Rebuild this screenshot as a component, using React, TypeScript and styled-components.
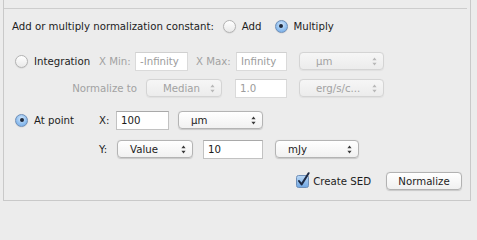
import React from 'react';
import styled, { createGlobalStyle } from 'styled-components';

const GlobalStyle = createGlobalStyle`
  html, body {
    margin: 0;
    padding: 0;
    background: #ececec;
  }
  body {
    font-family: "DejaVu Sans", "Lucida Grande", sans-serif;
    font-size: 10.2px;
    color: #1c1c1c;
  }
`;

const Panel = styled.div`
  box-sizing: border-box;
  margin-left: 3px;
  width: 468px;
  height: 201px;
  border: 1px solid #c9c9c9;
  border-top: none;
  display: flex;
  flex-direction: column;
`;

const Divider = styled.div`
  height: 8px;
  margin-right: 3px;
  border-bottom: 1px solid #cdcdcd;
`;

const Row = styled.div<{ $top: number; $h?: number; $left?: number }>`
  display: flex;
  align-items: center;
  margin-top: ${(p) => p.$top}px;
  height: ${(p) => p.$h ?? 20}px;
  padding-left: ${(p) => p.$left ?? 11}px;
`;

const FooterRow = styled(Row)`
  justify-content: flex-end;
  padding-right: 8px;
`;

const Label = styled.span<{ $w?: number; $dim?: boolean; $right?: boolean; $ml?: number }>`
  display: inline-block;
  white-space: nowrap;
  ${(p) => (p.$w ? `width: ${p.$w}px;` : '')}
  margin-left: ${(p) => p.$ml ?? 0}px;
  text-align: ${(p) => (p.$right ? 'right' : 'left')};
  color: ${(p) => (p.$dim ? '#a2a2a2' : '#1c1c1c')};
`;

const OptionCell = styled.label`
  display: flex;
  align-items: center;
  width: 84px;
  gap: 6px;
`;

const RadioDot = styled.span<{ $on?: boolean }>`
  box-sizing: border-box;
  width: 13px;
  height: 13px;
  border-radius: 50%;
  display: inline-flex;
  align-items: center;
  justify-content: center;
  flex: none;
  border: 1px solid ${(p) => (p.$on ? '#6f8fb8' : '#b3b3b3')};
  background: ${(p) =>
    p.$on
      ? 'radial-gradient(circle at 50% 35%, #d6e8fb 0%, #92c0ef 55%, #6ea6e4 100%)'
      : 'linear-gradient(#ffffff, #e9e9e9)'};
  box-shadow: 0 0.5px 1px rgba(0, 0, 0, 0.12);

  &::after {
    content: '';
    display: ${(p) => (p.$on ? 'block' : 'none')};
    width: 4px;
    height: 4px;
    border-radius: 50%;
    background: #1f2a3c;
  }
`;

const Field = styled.div<{ $w: number; $ml?: number; $dim?: boolean }>`
  box-sizing: border-box;
  width: ${(p) => p.$w}px;
  height: 19px;
  margin-left: ${(p) => p.$ml ?? 0}px;
  padding: 0 4px;
  display: flex;
  align-items: center;
  background: #ffffff;
  border: 1px solid ${(p) => (p.$dim ? '#dadada' : '#c2c2c2')};
  border-top-color: ${(p) => (p.$dim ? '#d0d0d0' : '#a9a9a9')};
  color: ${(p) => (p.$dim ? '#9c9c9c' : '#1c1c1c')};
  white-space: nowrap;
  overflow: hidden;
`;

const PopUp = styled.div<{ $w: number; $ml?: number; $dim?: boolean }>`
  box-sizing: border-box;
  width: ${(p) => p.$w}px;
  height: 18px;
  margin-left: ${(p) => p.$ml ?? 0}px;
  padding: 0 6px 0 ${(p) => (p.$dim ? 16 : 12)}px;
  display: flex;
  align-items: center;
  justify-content: space-between;
  border-radius: 4px;
  border: 1px solid ${(p) => (p.$dim ? '#d4d4d4' : '#b4b4b4')};
  background: ${(p) =>
    p.$dim ? 'linear-gradient(#f6f6f6, #ececec)' : 'linear-gradient(#ffffff, #f1f1f1)'};
  box-shadow: 0 0.5px 1px rgba(0, 0, 0, ${(p) => (p.$dim ? 0.05 : 0.15)});
  color: ${(p) => (p.$dim ? '#a2a2a2' : '#1c1c1c')};
  white-space: nowrap;
`;

const Arrows = ({ dim }: { dim?: boolean }) => (
  <svg width="5" height="9" viewBox="0 0 5 9">
    <path d="M2.5 0.5 L4.6 3.2 H0.4 Z M2.5 8.5 L4.6 5.8 H0.4 Z" fill={dim ? '#b8b8b8' : '#3a3a3a'} />
  </svg>
);

const Select = ({ w, ml, dim, children }: { w: number; ml?: number; dim?: boolean; children: React.ReactNode }) => (
  <PopUp $w={w} $ml={ml} $dim={dim}>
    <span>{children}</span>
    <Arrows dim={dim} />
  </PopUp>
);

const Radio = ({ on, children }: { on?: boolean; children: React.ReactNode }) => (
  <OptionCell>
    <RadioDot $on={on} />
    <Label>{children}</Label>
  </OptionCell>
);

const InlineRadio = styled.label<{ $ml: number }>`
  display: flex;
  align-items: center;
  gap: 6px;
  margin-left: ${(p) => p.$ml}px;
`;

const CheckLabel = styled.label`
  display: flex;
  align-items: center;
  gap: 3px;
`;

const CheckBox = () => (
  <svg width="14" height="16" viewBox="0 0 14 16" style={{ marginTop: -2 }}>
    <defs>
      <linearGradient id="cb" x1="0" y1="0" x2="0" y2="1">
        <stop offset="0" stopColor="#bcd9f6" />
        <stop offset="1" stopColor="#6fa6e2" />
      </linearGradient>
    </defs>
    <rect x="0.5" y="3.5" width="12" height="12" rx="2" fill="url(#cb)" stroke="#6f8fb8" />
    <path d="M3 9 L5.6 12.4 L12.6 1.2" fill="none" stroke="#1d2a44" strokeWidth="2" strokeLinecap="round" strokeLinejoin="round" />
  </svg>
);

const PushButton = styled.button`
  box-sizing: border-box;
  width: 76px;
  height: 18px;
  margin-left: 15px;
  padding: 0;
  font: inherit;
  color: #1c1c1c;
  border-radius: 4px;
  border: 1px solid #b2b2b2;
  background: linear-gradient(#ffffff, #f0f0f0);
  box-shadow: 0 0.5px 1px rgba(0, 0, 0, 0.15);
`;

export default function App() {
  return (
    <>
      <GlobalStyle />
      <Panel>
        <Divider />

        <Row $top={8} $h={18} $left={8}>
          <Label>Add or multiply normalization constant:</Label>
          <InlineRadio $ml={9}>
            <RadioDot />
            <Label>Add</Label>
          </InlineRadio>
          <InlineRadio $ml={13}>
            <RadioDot $on />
            <Label>Multiply</Label>
          </InlineRadio>
        </Row>

        <Row $top={16}>
          <Radio>Integration</Radio>
          <Label $w={36} $dim>X Min:</Label>
          <Field $w={53} $dim>-Infinity</Field>
          <Label $w={40} $ml={8} $dim>X Max:</Label>
          <Field $w={51} $dim>Infinity</Field>
          <Select w={85} ml={12} dim>µm</Select>
        </Row>

        <Row $top={7}>
          <Label $w={122} $right $dim>Normalize to</Label>
          <Select w={76} ml={9} dim>Median</Select>
          <Field $w={52} $ml={13} $dim>1.0</Field>
          <Select w={85} ml={12} dim>erg/s/c...</Select>
        </Row>

        <Row $top={12}>
          <Radio on>At point</Radio>
          <Label $w={17}>X:</Label>
          <Field $w={53}>100</Field>
          <Select w={85} ml={9}>µm</Select>
        </Row>

        <Row $top={9} $left={95}>
          <Label $w={18}>Y:</Label>
          <Select w={76}>Value</Select>
          <Field $w={60} $ml={10}>10</Field>
          <Select w={84} ml={12}>mJy</Select>
        </Row>

        <FooterRow $top={12}>
          <CheckLabel>
            <CheckBox />
            <Label>Create SED</Label>
          </CheckLabel>
          <PushButton>Normalize</PushButton>
        </FooterRow>
      </Panel>
    </>
  );
}
